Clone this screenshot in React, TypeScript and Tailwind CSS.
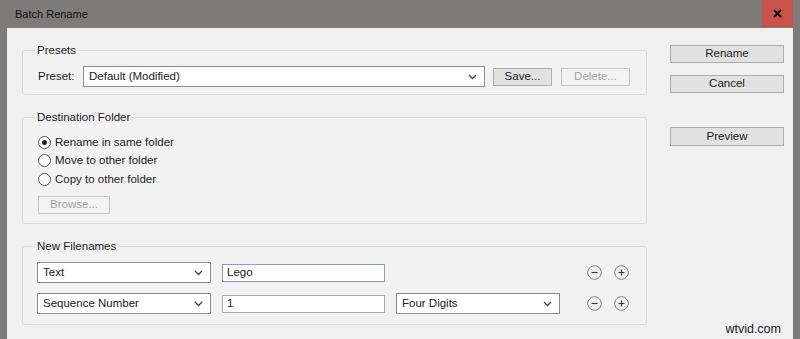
import React from "react";

const font = { fontFamily: '"Liberation Sans", Arial, sans-serif' };

const Chevron = () => (
  <svg width="9" height="6" viewBox="0 0 9 6" className="shrink-0">
    <path d="M1 1 L4.5 4.5 L8 1" fill="none" stroke="#404040" strokeWidth="1.3" />
  </svg>
);

const Select = ({ value, className }: { value: string; className: string }) => (
  <div
    className={`flex items-center justify-between bg-white border border-[#8c8c8c] pl-[5px] pr-[7px] text-[#1b1b1b] ${className}`}
  >
    <span>{value}</span>
    <Chevron />
  </div>
);

const Button = ({
  label,
  className,
  disabled,
}: {
  label: string;
  className: string;
  disabled?: boolean;
}) => (
  <div
    className={`flex items-center justify-center border ${
      disabled
        ? "border-[#c6c6c6] bg-[#f3f3f3] text-[#a3a3a3]"
        : "border-[#adadad] bg-[#e1e1e1] text-[#1b1b1b]"
    } ${className}`}
  >
    {label}
  </div>
);

const Radio = ({ label, checked }: { label: string; checked?: boolean }) => (
  <div className="flex h-[18.5px] items-center gap-[4px] pl-px">
    <div className="flex h-[13px] w-[13px] items-center justify-center rounded-full border border-[#555] bg-[#fafafa]">
      {checked && <div className="h-[5px] w-[5px] rounded-full bg-[#222]" />}
    </div>
    <span className="text-[#1b1b1b]">{label}</span>
  </div>
);

const RoundIcon = ({ plus }: { plus?: boolean }) => (
  <svg width="15" height="15" viewBox="0 0 15 15">
    <circle cx="7.5" cy="7.5" r="6.8" fill="#f4f4f4" stroke="#7d7d7d" strokeWidth="1" />
    <path d="M4.5 7.5 H10.5" stroke="#3a3a3a" strokeWidth="1.2" />
    {plus && <path d="M7.5 4.5 V10.5" stroke="#3a3a3a" strokeWidth="1.2" />}
  </svg>
);

const Group = ({ title, children, className }: { title: string; children: React.ReactNode; className: string }) => (
  <fieldset className={`w-[625px] rounded-[3px] border border-[#dadada] bg-[#f2f2f2] px-[14px] ${className}`}>
    <legend className="-ml-[2px] px-[2px] leading-[14px] text-[#222]">{title}</legend>
    {children}
  </fieldset>
);

export default function App() {
  return (
    <div style={font} className="flex h-[339px] w-[800px] flex-col overflow-hidden bg-[#7e7a78] text-[11.5px]">
      {/* title bar */}
      <div className="flex h-[28px] shrink-0 items-start justify-between pr-[7px]">
        <span className="pl-[15px] pt-[7px] text-[11px] leading-[14px] text-[#111]">Batch Rename</span>
        <div className="flex h-[27px] w-[31px] items-center justify-center bg-[#c8534b]">
          <svg width="9" height="9" viewBox="0 0 9 9">
            <path d="M1 1 L8 8 M8 1 L1 8" stroke="#111" strokeWidth="2" />
          </svg>
        </div>
      </div>

      <div className="mx-[7px] flex flex-1 bg-[#f0f0f0] pl-[15px] pr-[9px]">
        <div className="flex flex-col gap-[15px] pt-[15px]">
          <Group title="Presets" className="pt-[9px] pb-[7px]">
            <div className="flex items-center">
              <span className="w-[46px] pl-px text-[#1b1b1b]">Preset:</span>
              <Select value="Default (Modified)" className="h-[21px] w-[402px]" />
              <Button label="Save..." className="ml-[8px] h-[18px] w-[59px]" />
              <Button label="Delete..." disabled className="ml-[9px] h-[18px] w-[69px]" />
            </div>
          </Group>

          <Group title="Destination Folder" className="pt-[9px] pb-[9px]">
            <Radio label="Rename in same folder" checked />
            <Radio label="Move to other folder" />
            <Radio label="Copy to other folder" />
            <Button label="Browse..." disabled className="ml-px mt-[7.5px] h-[18px] w-[72px]" />
          </Group>

          <Group title="New Filenames" className="pt-[9px] pb-[10px]">
            <div className="grid grid-cols-[174px_163px_164px_auto] items-center gap-x-[11px] gap-y-[10px]">
              <Select value="Text" className="h-[21px]" />
              <div className="flex h-[18px] items-center border border-[#7c9fcf] bg-white pl-[4px] text-[#1b1b1b]">Lego</div>
              <div />
              <div className="ml-[16px] flex gap-[12px]">
                <RoundIcon />
                <RoundIcon plus />
              </div>

              <Select value="Sequence Number" className="h-[21px]" />
              <div className="flex h-[18px] items-center border border-[#a9a9a9] bg-white pl-[4px] text-[#1b1b1b]">1</div>
              <Select value="Four Digits" className="h-[21px]" />
              <div className="ml-[16px] flex gap-[12px]">
                <RoundIcon />
                <RoundIcon plus />
              </div>
            </div>
          </Group>
        </div>

        <div className="ml-[23px] flex w-[114px] flex-col pt-[17px]">
          <Button label="Rename" className="h-[18px] border-[#7eafdc]" />
          <Button label="Cancel" className="mt-[12px] h-[18px]" />
          <Button label="Preview" className="mt-[34px] h-[19px]" />
          <span className="mt-auto pb-[3px] pr-[3px] text-right text-[12.5px] leading-[14px] text-[#222]">wtvid.com</span>
        </div>
      </div>
    </div>
  );
}
